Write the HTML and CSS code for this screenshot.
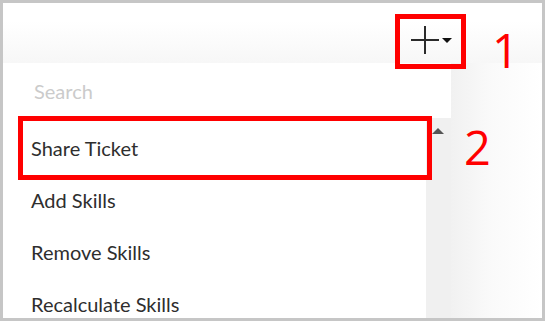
FILE: index.html
```html
<!DOCTYPE html>
<html lang="en">
<head>
    <meta charset="UTF-8">
    <title>Actions Menu</title>
    <link rel="stylesheet" href="styles.css">
</head>
<body>
    <div class="frame">

        <!-- Top bar with add button -->
        <div class="topbar">
            <button class="add-btn" type="button">
                <svg class="plus" width="28" height="28" viewBox="0 0 28 28">
                    <path d="M0 14H28M14 0V28" stroke="#2b2b2b" stroke-width="2" fill="none"/>
                </svg>
                <span class="caret"></span>
            </button>
        </div>

        <!-- Dropdown menu -->
        <div class="content">
            <div class="menu">
                <input class="search" type="text" placeholder="Search">
                <div class="list-wrap">
                    <ul class="list">
                        <li>Share Ticket</li>
                        <li>Add Skills</li>
                        <li>Remove Skills</li>
                        <li>Recalculate Skills</li>
                    </ul>
                    <div class="scroll-track">
                        <span class="scroll-up"></span>
                    </div>
                </div>
            </div>
            <div class="backdrop"></div>
        </div>

        <!-- Annotations -->
        <div class="mark mark-1"></div>
        <div class="num num-1">1</div>
        <div class="mark mark-2"></div>
        <div class="num num-2">2</div>
    </div>
</body>
</html>
```

FILE: styles.css
```css
/* Page */
body {
    margin: 0;
    font-family: 'Lato', 'Open Sans', sans-serif;
    background: #fff;
}
.frame {
    position: relative;
    width: 545px;
    height: 321px;
    box-sizing: border-box;
    border: 3px solid #c6c6c6;
    background: #fff;
    overflow: hidden;
}

/* Top bar */
.topbar {
    height: 60px;
    display: flex;
    justify-content: flex-end;
    align-items: flex-start;
    padding-right: 90px;
    background: linear-gradient(to bottom, #ffffff 30%, #f7f7f7 100%);
}
.add-btn {
    display: flex;
    align-items: flex-start;
    gap: 3px;
    margin-top: 23px;
    padding: 0;
    border: none;
    background: transparent;
}
.plus {
    display: block;
}
.caret {
    width: 0;
    height: 0;
    margin-top: 12px;
    border-left: 5px solid transparent;
    border-right: 5px solid transparent;
    border-top: 5px solid #111;
}

/* Menu */
.content {
    display: flex;
    height: 255px;
}
.menu {
    width: 441px;
    margin-left: 7px;
    display: flex;
    flex-direction: column;
    background: #fff;
}
.search {
    flex-shrink: 0;
    height: 55px;
    padding: 0 0 0 24px;
    border: none;
    outline: none;
    font-family: inherit;
    font-size: 20px;
    color: #333;
    background: #fff;
}
.search::placeholder {
    color: #cbcbcb;
}
.list-wrap {
    flex: 1;
    display: flex;
    min-height: 0;
    overflow: hidden;
}
.list {
    flex: 1;
    margin: 0;
    padding: 4px 0 0 0;
    list-style: none;
}
.list li {
    height: 52px;
    line-height: 52px;
    padding-left: 21px;
    font-size: 20px;
    color: #2e2e2e;
}
.scroll-track {
    width: 25px;
    background: #f0f0f0;
    display: flex;
    justify-content: center;
}
.scroll-up {
    width: 0;
    height: 0;
    margin-top: 10px;
    margin-right: 1px;
    border-left: 6px solid transparent;
    border-right: 6px solid transparent;
    border-bottom: 6px solid #555;
}
.backdrop {
    flex: 1;
    background: linear-gradient(to right, #f1f1f1 0%, #fafafa 45%, #ffffff 100%);
}

/* Annotations */
.mark {
    position: absolute;
    box-sizing: border-box;
    border: 5px solid #ff0000;
}
.mark-1 {
    left: 392px;
    top: 11px;
    width: 71px;
    height: 55px;
}
.mark-2 {
    left: 15px;
    top: 113px;
    width: 414px;
    height: 64px;
}
.num {
    position: absolute;
    font-family: 'Open Sans', sans-serif;
    font-size: 47px;
    line-height: 1;
    color: #ff0000;
}
.num-1 {
    left: 489px;
    top: 24px;
}
.num-2 {
    left: 461px;
    top: 121px;
}
```
